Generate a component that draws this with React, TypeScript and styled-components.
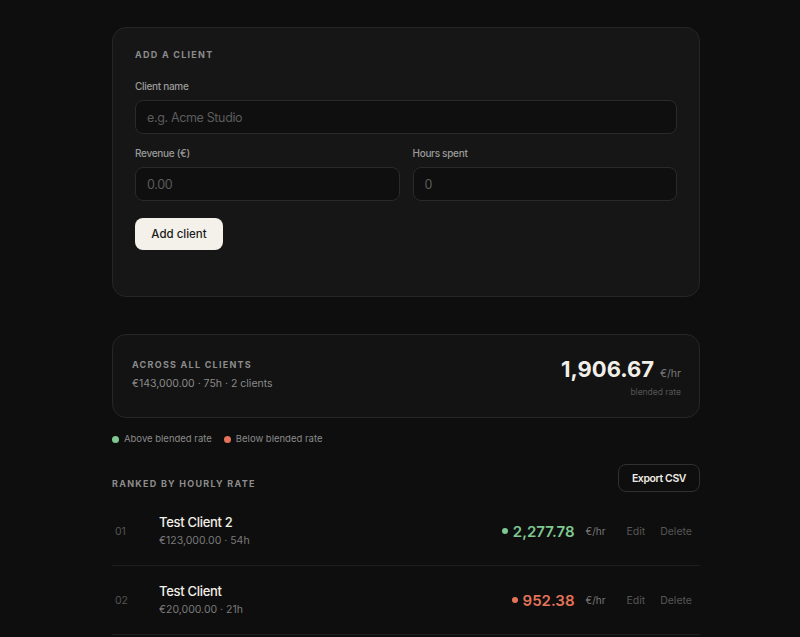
import React from "react";
import styled, { createGlobalStyle } from "styled-components";

const Global = createGlobalStyle`
  html, body { margin: 0; padding: 0; background: #0e0e0e; }
  body { font-family: Inter, "Noto Sans", sans-serif; color: #efece6; -webkit-font-smoothing: antialiased; }
  * { box-sizing: border-box; }
`;

const Page = styled.div`
  width: 600px;
  margin: 0 auto;
  padding: 27px 0 40px 12px;
  display: flex;
  flex-direction: column;
`;

const Card = styled.section`
  background: #161616;
  border: 1px solid #262626;
  border-radius: 14px;
`;

const FormCard = styled(Card)`
  padding: 20px 22px 46px;
  display: flex;
  flex-direction: column;
`;

const Eyebrow = styled.h2`
  margin: 0;
  font-size: 9px;
  line-height: 14px;
  font-weight: 700;
  letter-spacing: 0.14em;
  text-transform: uppercase;
  color: #8c8c8c;
`;

const Field = styled.label`
  display: flex;
  flex-direction: column;
  gap: 6px;
  flex: 1;
`;

const FieldLabel = styled.span`
  font-size: 10px;
  line-height: 16px;
  letter-spacing: -0.3px;
  font-weight: 500;
  color: #9a9a9a;
`;

const Input = styled.input`
  height: 34px;
  background: #0f0f0f;
  border: 1px solid #2a2a2a;
  border-radius: 8px;
  padding: 0 11px;
  font-family: inherit;
  font-size: 12.5px;
  letter-spacing: -0.35px;
  color: #efece6;
  outline: none;
  &::placeholder { color: #5c5c5c; }
`;

const FieldRow = styled.div<{ $mt: number }>`
  display: flex;
  gap: 13px;
  margin-top: ${(p) => p.$mt}px;
`;

const PrimaryButton = styled.button`
  align-self: flex-start;
  margin-top: 17px;
  width: 88px;
  height: 32px;
  border: none;
  border-radius: 8px;
  background: #f4f1ea;
  color: #1a1a1a;
  font-family: inherit;
  font-size: 11.5px;
  font-weight: 500;
`;

const SummaryCard = styled(Card)`
  margin-top: 37px;
  background: #131313;
  height: 84px;
  padding: 0 18px 3px 19px;
  display: flex;
  align-items: center;
  justify-content: space-between;
`;

const SummaryLeft = styled.div`
  display: flex;
  flex-direction: column;
  gap: 5px;
`;

const SubText = styled.span`
  font-size: 10.5px;
  line-height: 14px;
  color: #8a8a8a;
`;

const SummaryRight = styled.div`
  display: flex;
  flex-direction: column;
  align-items: flex-end;
  gap: 6px;
  padding-top: 4px;
`;

const BigRate = styled.div`
  display: flex;
  align-items: baseline;
  gap: 6px;
`;

const BigNumber = styled.span`
  font-size: 22px;
  line-height: 24px;
  font-weight: 650;
  color: #f2efe8;
`;

const Unit = styled.span`
  font-size: 10.5px;
  color: #787878;
`;

const Caption = styled.span`
  font-size: 8.5px;
  color: #555;
`;

const Legend = styled.div`
  display: flex;
  gap: 12px;
  margin-top: 14px;
`;

const LegendItem = styled.span`
  display: flex;
  align-items: center;
  gap: 5px;
  font-size: 9.5px;
  line-height: 14px;
  color: #8a8a8a;
`;

const Dot = styled.span<{ $c: string; $s?: number }>`
  width: ${(p) => p.$s ?? 7}px;
  height: ${(p) => p.$s ?? 7}px;
  border-radius: 50%;
  background: ${(p) => p.$c};
  flex: none;
`;

const ListHeader = styled.div`
  margin-top: 18px;
  display: flex;
  justify-content: space-between;
  align-items: flex-end;
`;

const SectionTitle = styled(Eyebrow)`
  padding-bottom: 1px;
`;

const GhostButton = styled.button`
  width: 82px;
  height: 28px;
  border: 1px solid #303030;
  border-radius: 8px;
  background: #0e0e0e;
  color: #eeebe4;
  font-family: inherit;
  font-size: 10.5px;
  letter-spacing: -0.4px;
  font-weight: 600;
`;

const List = styled.div`
  margin-top: 5px;
  display: flex;
  flex-direction: column;
`;

const Row = styled.div`
  display: flex;
  align-items: center;
  padding: 16px 8px 16px 3px;
  border-bottom: 1px solid #1e1e1e;
`;

const Index = styled.span`
  width: 44px;
  font-size: 10.5px;
  color: #555;
`;

const ClientInfo = styled.div`
  flex: 1;
  display: flex;
  flex-direction: column;
  gap: 2px;
`;

const ClientName = styled.span`
  font-size: 13px;
  line-height: 18px;
  letter-spacing: -0.3px;
  font-weight: 500;
  color: #f2efe8;
`;

const ClientMeta = styled.span`
  font-size: 10.5px;
  line-height: 16px;
  color: #7a7a7a;
`;

const Rate = styled.span<{ $c: string }>`
  display: flex;
  align-items: center;
  gap: 5px;
  font-size: 15px;
  font-weight: 600;
  color: ${(p) => p.$c};
`;

const RowUnit = styled.span`
  margin-left: 11px;
  font-size: 10px;
  color: #777;
`;

const Action = styled.button<{ $ml: number }>`
  background: none;
  border: none;
  padding: 0;
  margin-left: ${(p) => p.$ml}px;
  font-family: inherit;
  font-size: 10.5px;
  color: #565656;
`;

const GREEN = "#7fc891";
const RED = "#e47459";

const clients = [
  { name: "Test Client 2", meta: "€123,000.00 · 54h", rate: "2,277.78", color: GREEN },
  { name: "Test Client", meta: "€20,000.00 · 21h", rate: "952.38", color: RED },
];

export default function App() {
  return (
    <>
      <Global />
      <Page>
        <FormCard>
          <Eyebrow>Add a client</Eyebrow>
          <FieldRow $mt={16}>
            <Field>
              <FieldLabel>Client name</FieldLabel>
              <Input placeholder="e.g. Acme Studio" />
            </Field>
          </FieldRow>
          <FieldRow $mt={11}>
            <Field>
              <FieldLabel>Revenue (€)</FieldLabel>
              <Input placeholder="0.00" />
            </Field>
            <Field>
              <FieldLabel>Hours spent</FieldLabel>
              <Input placeholder="0" />
            </Field>
          </FieldRow>
          <PrimaryButton>Add client</PrimaryButton>
        </FormCard>

        <SummaryCard>
          <SummaryLeft>
            <Eyebrow>Across all clients</Eyebrow>
            <SubText>€143,000.00 · 75h · 2 clients</SubText>
          </SummaryLeft>
          <SummaryRight>
            <BigRate>
              <BigNumber>1,906.67</BigNumber>
              <Unit>€/hr</Unit>
            </BigRate>
            <Caption>blended rate</Caption>
          </SummaryRight>
        </SummaryCard>

        <Legend>
          <LegendItem><Dot $c={GREEN} />Above blended rate</LegendItem>
          <LegendItem><Dot $c={RED} />Below blended rate</LegendItem>
        </Legend>

        <ListHeader>
          <SectionTitle>Ranked by hourly rate</SectionTitle>
          <GhostButton>Export CSV</GhostButton>
        </ListHeader>

        <List>
          {clients.map((c, i) => (
            <Row key={c.name}>
              <Index>{String(i + 1).padStart(2, "0")}</Index>
              <ClientInfo>
                <ClientName>{c.name}</ClientName>
                <ClientMeta>{c.meta}</ClientMeta>
              </ClientInfo>
              <Rate $c={c.color}>
                <Dot $c={c.color} $s={6} />
                {c.rate}
              </Rate>
              <RowUnit>€/hr</RowUnit>
              <Action $ml={21}>Edit</Action>
              <Action $ml={15}>Delete</Action>
            </Row>
          ))}
        </List>
      </Page>
    </>
  );
}
